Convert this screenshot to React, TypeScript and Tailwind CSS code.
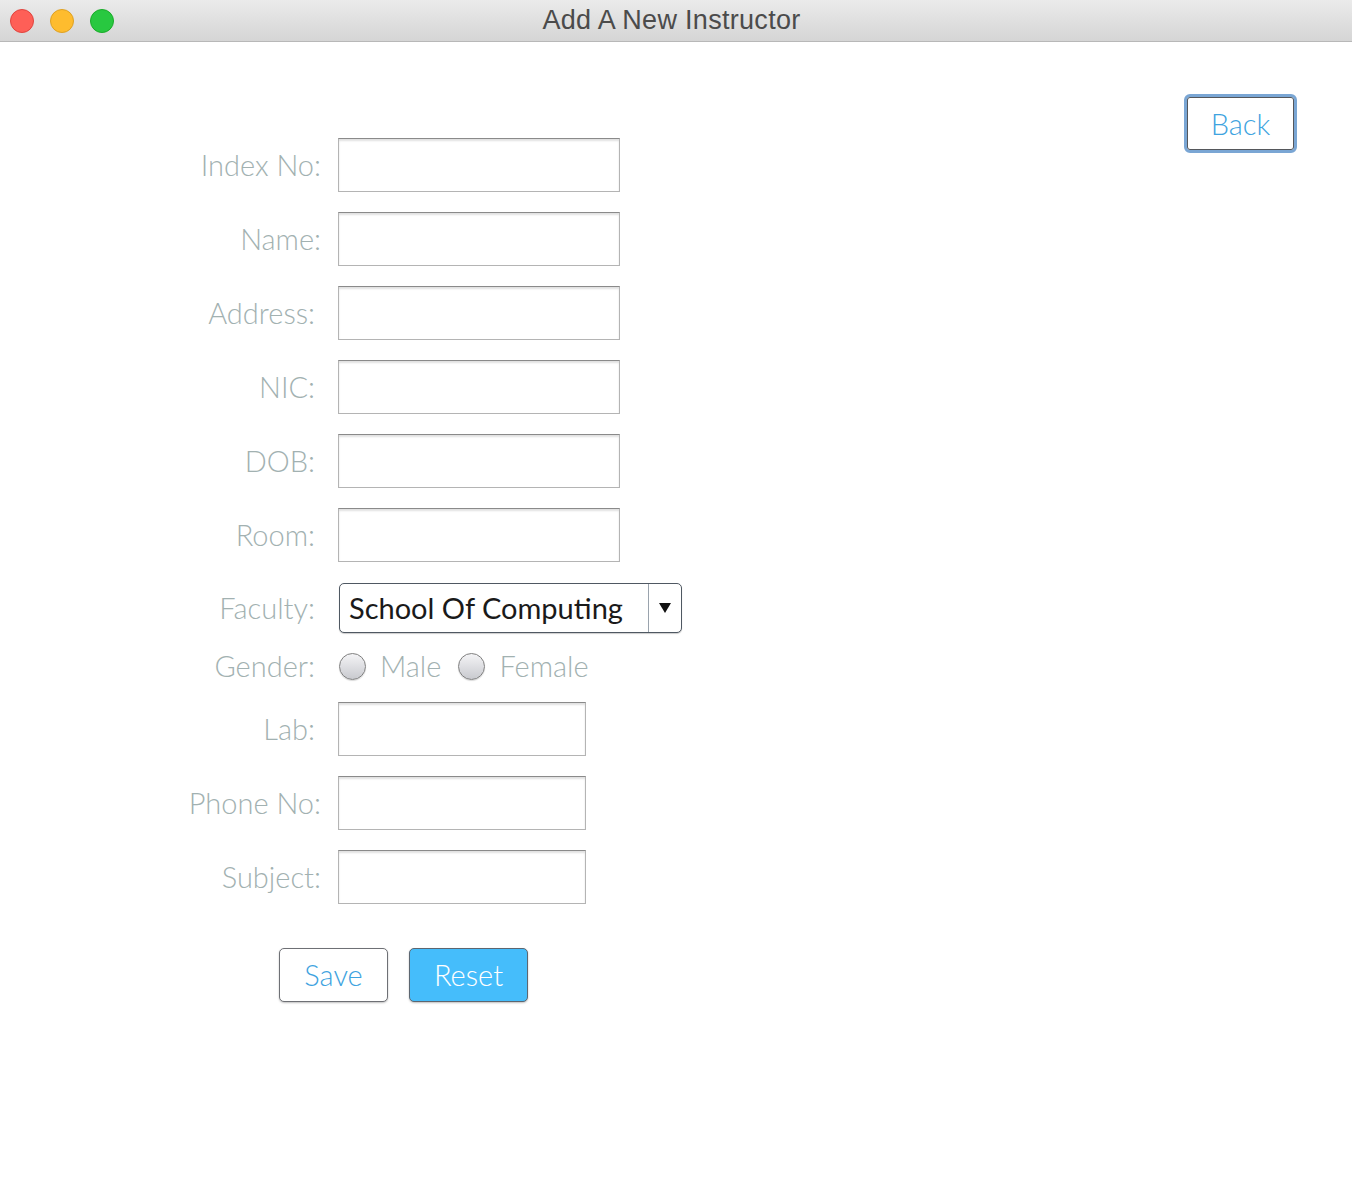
import React from 'react'

const Field = ({ label, width, pad }: { label: string; width: string; pad?: boolean }) => (
  <div className="flex h-[54px] items-center">
    <div className={`w-[321px] text-right ${pad ? 'pr-[6px]' : ''}`}>{label}</div>
    <div
      className={`ml-[17px] h-[54px] ${width} border border-[#b4b4b4] border-t-[#8a8a8a] bg-white shadow-[inset_0_2px_2px_rgba(0,0,0,0.12)]`}
    />
  </div>
)

const Radio = ({ label }: { label: string }) => (
  <div className="flex items-center">
    <div className="h-[27px] w-[27px] rounded-full border border-[#7f7f7f] bg-gradient-to-b from-[#f4f4f6] to-[#c9cacf] shadow-[0_1px_1px_rgba(0,0,0,0.15)]" />
    <span className="ml-[14px]">{label}</span>
  </div>
)

export default function App() {
  return (
    <div className="min-h-screen bg-white" style={{ fontFamily: 'Lato, "Open Sans", sans-serif' }}>
      <div className="relative flex h-[42px] items-center border-b border-[#b8b8b8] bg-gradient-to-b from-[#ebebeb] to-[#d5d5d5]">
        <div className="flex gap-[16px] pl-[10px]">
          <div className="h-[24px] w-[24px] rounded-full border border-[#e0443e] bg-[#fe5f57]" />
          <div className="h-[24px] w-[24px] rounded-full border border-[#dea123] bg-[#febc2e]" />
          <div className="h-[24px] w-[24px] rounded-full border border-[#1aab29] bg-[#28c840]" />
        </div>
        <div
          className="absolute inset-x-0 pr-[9px] text-center text-[27px] tracking-[0.3px] text-[#4b4b4b]"
          style={{ fontFamily: '"Liberation Sans", Arial, sans-serif' }}
        >
          Add A New Instructor
        </div>
      </div>

      <div className="flex justify-between">
        <div className="flex flex-col pt-[96px] text-[29px] font-light text-[#a2b1b1]">
          <div className="flex flex-col gap-[20px]">
            <Field label="Index No:" width="w-[282px]" />
            <Field label="Name:" width="w-[282px]" />
            <Field label="Address:" width="w-[282px]" pad />
            <Field label="NIC:" width="w-[282px]" pad />
            <Field label="DOB:" width="w-[282px]" pad />
            <Field label="Room:" width="w-[282px]" pad />
          </div>

          <div className="mt-[21px] flex h-[50px] items-center">
            <div className="w-[321px] pr-[6px] text-right">Faculty:</div>
            <div className="ml-[18px] flex h-[50px] w-[343px] items-stretch rounded-[5px] border border-[#4f5862] bg-white shadow-[0_1px_1px_rgba(0,0,0,0.2)]">
              <div className="flex flex-1 items-center pl-[9px] text-[29px] font-normal text-[#1a1a1a]">
                School Of Computing
              </div>
              <div className="flex w-[33px] items-center justify-center border-l border-[#9aa3ad]">
                <svg width="12" height="10" viewBox="0 0 12 10">
                  <path d="M0 0 H12 L6 10 Z" fill="#111" />
                </svg>
              </div>
            </div>
          </div>

          <div className="mt-[8px] flex h-[50px] items-center">
            <div className="w-[321px] pr-[6px] text-right">Gender:</div>
            <div className="ml-[18px] flex gap-[17px]">
              <Radio label="Male" />
              <Radio label="Female" />
            </div>
          </div>

          <div className="mt-[11px] flex flex-col gap-[20px]">
            <Field label="Lab:" width="w-[248px]" pad />
            <Field label="Phone No:" width="w-[248px]" />
            <Field label="Subject:" width="w-[248px]" />
          </div>

          <div className="mt-[44px] flex gap-[21px] pl-[279px]">
            <button className="h-[54px] w-[109px] rounded-[5px] border border-[#6e7075] bg-white text-[29px] font-light text-[#3ea3e0] shadow-[0_1px_2px_rgba(0,0,0,0.25)]">
              Save
            </button>
            <button className="h-[54px] w-[119px] rounded-[5px] border border-[#5d6670] bg-[#45bdfb] text-[29px] font-light text-white shadow-[0_1px_2px_rgba(0,0,0,0.25)]">
              Reset
            </button>
          </div>
        </div>

        <div className="pr-[55px] pt-[52px]">
          <button className="h-[59px] w-[113px] rounded-[6px] border-[3px] border-[#7aa6d4] bg-white text-[29px] font-light text-[#3ea3e0] shadow-[inset_0_0_0_1px_#55575b]">
            Back
          </button>
        </div>
      </div>
    </div>
  )
}
